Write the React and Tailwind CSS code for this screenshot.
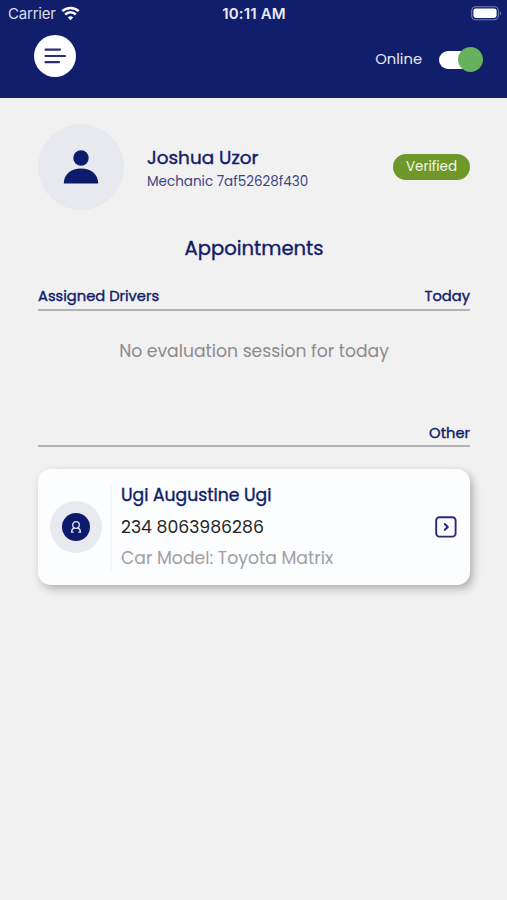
const MenuIcon = () => (
  <svg width="22" height="18" viewBox="0 0 22 18" fill="none" stroke="#2b2f7c" strokeWidth="2.2" strokeLinecap="round">
    <path d="M1.5 2.6h14.5M1.5 9h19.5M1.5 15.2h13.5" />
  </svg>
)

const WifiIcon = () => (
  <svg width="19" height="15" viewBox="0 0 19 15" fill="none" stroke="#fff" strokeWidth="2.5">
    <path d="M1.3 5.2a11.8 11.8 0 0 1 16.4 0M4.2 8.5a7.6 7.6 0 0 1 10.6 0" />
    <path d="M9.5 14.2l-2.7-2.7a3.9 3.9 0 0 1 5.4 0z" fill="#fff" stroke="none" />
  </svg>
)

const BatteryIcon = () => (
  <svg width="31" height="15" viewBox="0 0 31 15" fill="none">
    <rect x="0.7" y="0.7" width="26.6" height="13" rx="4" stroke="#7880b0" strokeWidth="1.1" />
    <rect x="2.4" y="2.4" width="23.2" height="9.6" rx="2.4" fill="#fff" />
    <path d="M28.9 5.2c1.5.6 1.5 3.8 0 4.4z" fill="#7880b0" />
  </svg>
)

const PersonIcon = () => (
  <svg width="36" height="34" viewBox="0 0 36 34" fill="#0d1b6c">
    <circle cx="18" cy="8" r="7.7" />
    <path d="M.8 33.5C.8 24.5 8 18.6 18 18.6s17.2 5.9 17.2 14.9z" />
  </svg>
)

const BadgeIcon = () => (
  <svg width="12" height="14" viewBox="0 0 12 14" fill="none" stroke="#dfe2f2" strokeWidth="1.3" strokeLinecap="round" strokeLinejoin="round">
    <circle cx="6" cy="5" r="3.3" />
    <path d="M4.2 7.9C2.4 8.7 1.6 10 1.5 12.2h1.7M7.8 7.9c1.8.8 2.6 2.1 2.7 4.3H8.8" />
  </svg>
)

const ArrowBoxIcon = () => (
  <svg width="22" height="22" viewBox="0 0 22 22" fill="none" stroke="#252b78">
    <rect x="1.2" y="1.2" width="19.4" height="19.4" rx="3.2" strokeWidth="1.9" />
    <path d="M9.8 8l3 2.9-3 2.9" strokeWidth="2.1" strokeLinecap="round" strokeLinejoin="round" />
  </svg>
)

const appointments = [
  { name: 'Ugi Augustine Ugi', phone: '234 8063986286', car: 'Toyota Matrix' },
]

export default function App() {
  return (
    <div className="w-full h-screen overflow-hidden bg-[#f1f1f1] text-[#111c6b] font-[Poppins,Inter,sans-serif] whitespace-nowrap">

      {/* Header */}
      <header className="h-[98px] bg-[#111e6c] text-white">
        <div className="h-7 grid grid-cols-3 items-center pl-2 pr-[5px] text-[15px] leading-7">
          <div className="flex items-center gap-[5px] font-[Inter]">
            <span className="text-[#dcdeeb] tracking-[-0.2px]">Carrier</span>
            <div className="-mt-0.5"><WifiIcon /></div>
          </div>
          <span className="text-center font-[Inter] font-semibold text-[15px] text-[#e9eaf4] tracking-[0.15px] -ml-0.5">10:11 AM</span>
          <div className="flex justify-end -mt-0.5"><BatteryIcon /></div>
        </div>
        <div className="flex items-center justify-between pl-[34px] pr-[24px] pt-[6px]">
          <button className="w-[42px] h-[42px] mt-px rounded-full bg-white flex items-center justify-center">
            <MenuIcon />
          </button>
          <div className="flex items-center gap-[17px] pt-[8px]">
            <span className="text-[14.7px] text-[#e6e8f3]">Online</span>
            <div className="w-[44px] h-[25px] flex items-center">
              <div className="w-10 h-[18px] rounded-full bg-white flex items-center">
                <div className="w-[25px] h-[25px] rounded-full bg-[#66b15c] shrink-0 ml-[19px]" />
              </div>
            </div>
          </div>
        </div>
      </header>

      <main className="pl-[38px] pr-[37px] pt-[26px]">

        {/* Profile */}
        <section className="h-[86px] flex items-center">
          <div className="w-[86px] h-[86px] rounded-full bg-[#e8e9ef] flex items-center justify-center">
            <PersonIcon />
          </div>
          <div className="ml-[23px] mt-[5px] flex-1">
            <p className="text-[18.4px] leading-6 [-webkit-text-stroke:0.4px]">Joshua Uzor</p>
            <p className="text-[13.5px] leading-6 text-[#3d4485]">Mechanic 7af52628f430</p>
          </div>
          <span className="w-[77px] h-[26px] pt-px rounded-full bg-[#6f982b] text-[#f3f7e9] text-[13.5px] flex items-center justify-center">
            Verified
          </span>
        </section>

        {/* Assigned drivers */}
        <h1 className="mt-[23px] text-center text-[19.6px] leading-[31px] [-webkit-text-stroke:0.4px]">Appointments</h1>
        <div className="mt-[19px] h-7 flex justify-between border-b-2 border-[#b3b3b3] text-[14.7px] leading-[27px] [-webkit-text-stroke:0.4px]">
          <h2>Assigned Drivers</h2>
          <span>Today</span>
        </div>
        <p className="mt-[26px] text-center text-[17.2px] leading-[28px] text-[#8b8b8b]">No evaluation session for today</p>

        <div className="mt-[54px] h-7 flex justify-end border-b-2 border-[#b3b3b3] text-[14.7px] leading-[28px] [-webkit-text-stroke:0.4px]">
          <span>Other</span>
        </div>
        <div className="mt-[22px]">
          {appointments.map(item => (
            <div key={item.phone} className="h-[116px] rounded-[13px] bg-[#fcfdfe] shadow-[3px_4px_9px_rgba(0,0,0,0.27)] flex items-center pl-3 pr-[13px]">
              <div className="w-[52px] h-[52px] rounded-full bg-[#e9eaf0] flex items-center justify-center">
                <div className="w-7 h-7 rounded-full bg-[#0d1b6c] flex items-center justify-center">
                  <BadgeIcon />
                </div>
              </div>
              <div className="ml-2 pl-[9px] h-[88px] border-l-2 border-[#f6f6fa] flex-1">
                <p className="mt-[-3px] text-[17.2px] leading-[30px] [-webkit-text-stroke:0.4px]">{item.name}</p>
                <p className="mt-[2px] text-[17.25px] leading-[30px] text-[#262626]">{item.phone}</p>
                <p className="mt-[1px] text-[17.25px] leading-[30px] text-[#a0a0a0]">Car Model: {item.car}</p>
              </div>
              <button><ArrowBoxIcon /></button>
            </div>
          ))}
        </div>
      </main>
    </div>
  )
}
